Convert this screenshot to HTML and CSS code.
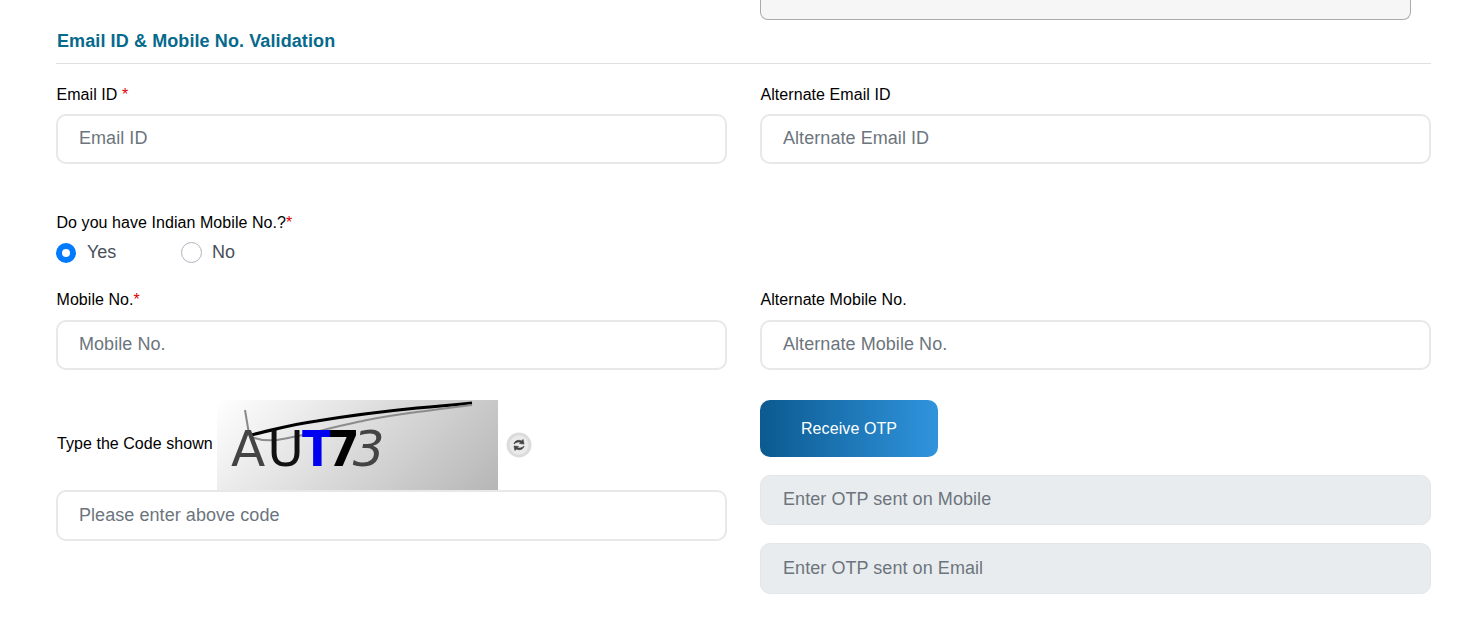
FILE: index.html
```html
<!DOCTYPE html>
<html>
<head>
	<title>Email ID &amp; Mobile No. Validation</title>
	<link rel="stylesheet" href="styles.css">
</head>
<body>
	<div class="page">
		<div class="two">
			<div></div>
			<div class="topbox"></div>
		</div>
		<h4 class="title">Email ID &amp; Mobile No. Validation</h4>

		<div class="two">
			<div>
				<label>Email ID <span class="req">*</span></label>
				<input class="field" type="text" placeholder="Email ID">
			</div>
			<div>
				<label>Alternate Email ID</label>
				<input class="field" type="text" placeholder="Alternate Email ID">
			</div>
		</div>

		<div class="ask">
			<label>Do you have Indian Mobile No.?<span class="req">*</span></label>
			<div class="radios">
				<div class="radio"><span class="dot on"></span>Yes</div>
				<div class="radio"><span class="dot"></span>No</div>
			</div>
		</div>

		<div class="two row3">
			<div>
				<label>Mobile No.<span class="req">*</span></label>
				<input class="field" type="text" placeholder="Mobile No.">
			</div>
			<div>
				<label>Alternate Mobile No.</label>
				<input class="field" type="text" placeholder="Alternate Mobile No.">
			</div>
		</div>

		<div class="two row4">
			<div>
				<div class="code">
					<span class="codelabel">Type the Code shown</span>
					<div class="captcha">
						<svg class="scratch" width="281" height="90" viewBox="0 0 281 90">
							<path d="M28 10 L32 34" fill="none" stroke="#8a8a8a" stroke-width="2"/>
							<path d="M34 35 C60 29 76 24 100 21 C130 16 170 11 200 8 C225 6 245 4 255 3" fill="none" stroke="#000" stroke-width="3.2"/>
							<path d="M34 37 C42 40 50 41 60 40 C72 38 85 35 96 33 C115 27 132 24 150 20 C170 16 185 14 200 12 C225 9 245 6 255 5" fill="none" stroke="#8c8c8c" stroke-width="2"/>
						</svg>
						<span class="c1">A</span><span class="c2">U</span><span class="c3">T</span><span class="c4">7</span><span class="c5">3</span>
					</div>
					<svg class="refresh" width="26" height="26" viewBox="0 0 26 26">
						<circle cx="13" cy="13" r="12.5" fill="#dcdcdc"/>
						<circle cx="13" cy="13" r="9.5" fill="#eaeaea"/>
						<path d="M8 12 C8.5 8.5 13 7.5 15.5 9 L17 7.5 L18 12 L13.5 11.5 L14.8 10.3 C12.5 9.5 10 10 8 12 Z" fill="#444" stroke="#444" stroke-width=".7"/>
						<path d="M18 14 C17.5 17.5 13 18.5 10.5 17 L9 18.5 L8 14 L12.5 14.5 L11.2 15.7 C13.5 16.5 16 16 18 14 Z" fill="#444" stroke="#444" stroke-width=".7"/>
					</svg>
				</div>
				<input class="field codefield" type="text" placeholder="Please enter above code">
			</div>
			<div>
				<button class="otp" type="button">Receive OTP</button>
				<input class="field grey" type="text" placeholder="Enter OTP sent on Mobile" disabled>
				<input class="field grey" type="text" placeholder="Enter OTP sent on Email" disabled>
			</div>
		</div>
	</div>
</body>
</html>
```

FILE: styles.css
```css
html, body {
	margin: 0;
	padding: 0;
	background: #fff;
	overflow: hidden;
}
body {
	font-family: "Liberation Sans", Arial, sans-serif;
	font-size: 16px;
	color: #000;
}
.page {
	width: 1375px;
	margin-left: 56px;
}
.two {
	display: grid;
	grid-template-columns: 671px 671px;
	column-gap: 33px;
}
.topbox {
	box-sizing: border-box;
	width: 651px;
	height: 20px;
	background: #f6f6f6;
	border: 1px solid #aaa;
	border-top: 0;
	border-radius: 0 0 8px 8px;
}
.title {
	margin: 0 0 20px;
	padding: 11px 0 12px 1px;
	height: 20px;
	line-height: 20px;
	font-size: 18px;
	font-weight: bold;
	letter-spacing: .1px;
	color: #066a8c;
	border-bottom: 1px solid #e0e0e0;
}
label {
	display: block;
	height: 20px;
	line-height: 20px;
	margin: 1px 0 9px;
	padding-left: .5px;
	letter-spacing: .06px;
}
.row3 label {
	margin: 0 0 10px;
}
.req {
	color: #e00000;
}
.field {
	display: block;
	box-sizing: border-box;
	width: 671px;
	height: 50px;
	padding: 0 21px 2px;
	border: 2px solid #e8e8e8;
	border-radius: 10px;
	background: #fff;
	font-family: "Liberation Sans", Arial, sans-serif;
	font-size: 18px;
	letter-spacing: .06px;
	outline: none;
}
.field::placeholder {
	color: #6c757d;
	opacity: 1;
}
.codefield {
	height: 51px;
	padding-bottom: 1px;
}
.ask {
	margin-top: 49px;
	height: 77px;
}
.ask label {
	margin-top: 0;
}
.radios {
	display: flex;
}
.radio {
	display: flex;
	align-items: center;
	width: 125px;
	height: 21px;
	font-size: 18px;
	color: #495057;
}
.dot {
	box-sizing: border-box;
	width: 21px;
	height: 21px;
	margin-right: 10px;
	border: 1px solid #adb5bd;
	border-radius: 50%;
	background: #fff;
}
.dot.on {
	width: 20px;
	height: 20px;
	margin-right: 11px;
	border: 6px solid #007bff;
}
.row4 {
	margin-top: 30px;
}
.code {
	display: flex;
	align-items: center;
	height: 90px;
}
.codelabel {
	box-sizing: border-box;
	width: 161px;
	padding: 0 0 2px 1px;
	letter-spacing: .05px;
}
.captcha {
	position: relative;
	display: flex;
	align-items: flex-end;
	box-sizing: border-box;
	width: 281px;
	height: 90px;
	padding: 0 0 16px 14px;
	background: linear-gradient(135deg, #fff 0%, #b6b6b6 100%);
	font-family: "DejaVu Sans", sans-serif;
	font-size: 50px;
	line-height: 50px;
	color: #000;
	overflow: hidden;
}
.scratch {
	position: absolute;
	left: 0;
	top: 0;
	filter: blur(.4px);
}
.captcha span {
	display: block;
	filter: blur(.3px);
}
.c1 {
	color: #444;
	margin-right: 4px;
	letter-spacing: -2px;
}
.c2 {
	color: #111;
	margin-right: -1px;
	letter-spacing: -2px;
}
.c3 {
	color: #0000f0;
	font-weight: bold;
	margin: 0 -6px 0 1px;
	letter-spacing: -3px;
	transform: scaleX(.9);
	transform-origin: left;
}
.c4 {
	font-weight: bold;
	letter-spacing: -9px;
	transform: scaleX(.94);
	transform-origin: left;
}
.c5 {
	color: #444;
	font-style: italic;
	letter-spacing: -2px;
}
.refresh {
	margin-left: 8px;
	filter: blur(.5px);
}
.otp {
	display: block;
	width: 178px;
	height: 57px;
	margin-bottom: 18px;
	border: 0;
	border-radius: 10px;
	background: linear-gradient(90deg, #0b5a90 0%, #3094dd 100%);
	color: #fff;
	font-family: "Liberation Sans", Arial, sans-serif;
	font-size: 16px;
	letter-spacing: .1px;
}
.grey {
	background: #e9ecef;
	border: 1px solid #e4e6e9;
	padding: 0 22px 2px;
	margin-bottom: 18px;
}
.grey + .grey {
	height: 51px;
	padding-bottom: 1px;
}
```
